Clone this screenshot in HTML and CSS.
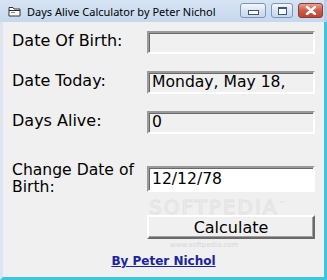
FILE: index.html
```html
<!DOCTYPE html>
<html>
<head>
<title>Days Alive Calculator by Peter Nichol</title>
<meta http-equiv="content-type" content="text/html; charset=utf8">
<link rel="stylesheet" href="styles.css">
</head>
<body>
<div class="window">
    <div class="titlebar">
        <svg class="appicon" width="13" height="12" viewBox="0 0 13 12">
            <path d="M1 2.5h4l1 1.5h6v7H1z" fill="#fff" stroke="#333" stroke-width="1"/>
            <path d="M1 5.5h11" stroke="#333" stroke-width="1"/>
            <path d="M3 7.5h4" stroke="#888" stroke-width="1"/>
        </svg>
        <span class="caption">Days Alive Calculator by Peter Nichol</span>
        <div class="capbtns">
            <div class="capbtn minbtn"><span class="minglyph"></span></div>
            <div class="capbtn maxbtn"><span class="maxglyph"></span></div>
            <div class="capbtn closebtn">
                <svg width="12" height="9" viewBox="0 0 12 9">
                    <path d="M2 1l8 7M10 1l-8 7" stroke="#fff" stroke-width="2.4" stroke-linecap="round"/>
                </svg>
            </div>
        </div>
    </div>

    <div class="client">
        <div class="row row-first">
            <div class="label">Date Of Birth:</div>
            <div class="field"></div>
        </div>
        <div class="row">
            <div class="label">Date Today:</div>
            <div class="field">Monday, May 18,</div>
        </div>
        <div class="row">
            <div class="label">Days Alive:</div>
            <div class="field">0</div>
        </div>
        <div class="row row-change">
            <div class="label label-two">Change Date of<br>Birth:</div>
            <div class="field field-edit">12/12/78</div>
        </div>
        <div class="row row-button">
            <div class="spacer"></div>
            <div class="button">Calculate</div>
        </div>
        <div class="credit"><a href="javascript:void(0)">By Peter Nichol</a></div>

        <div class="watermark">SOFTPEDIA<sup>™</sup></div>
        <div class="watermark-url">www.softpedia.com</div>
    </div>
</div>
</body>
</html>
```

FILE: styles.css
```css
body {
    margin: 0;
    width: 327px;
    height: 280px;
    overflow: hidden;
    background: #000;
}
.window {
    display: flex;
    flex-direction: column;
    height: 280px;
    background: #cbdcef;
}
.titlebar {
    height: 22px;
    display: flex;
    align-items: center;
    padding-left: 8px;
    background: linear-gradient(#d6e4f4, #c5d8ee);
    border-right: 3px solid #b9cde6;
}
.appicon {
    margin-right: 6px;
}
.caption {
    font-family: "Noto Sans", sans-serif;
    font-size: 11px;
    color: #000;
    flex: 1;
}
.capbtns {
    display: flex;
    gap: 5px;
    margin-right: 1px;
    margin-top: -1px;
}
.capbtn {
    height: 13px;
    border: 1px solid #7f95b8;
    border-radius: 3px;
    display: flex;
    align-items: center;
    justify-content: center;
    background: linear-gradient(#f3f7fc, #d9e4f2 50%, #c8d7ea);
}
.minbtn {
    width: 24px;
}
.maxbtn {
    width: 20px;
}
.closebtn {
    width: 23px;
    border-color: #8a3a34;
    background: linear-gradient(#e8a293, #cf5a47 50%, #c0432f);
}
.minglyph {
    width: 9px;
    height: 3px;
    border: 1px solid #41577a;
    background: #fff;
    margin-top: 3px;
}
.maxglyph {
    width: 7px;
    height: 5px;
    border: 1px solid #41577a;
    border-top-width: 2px;
    background: #fff;
}
.client {
    position: relative;
    flex: 1;
    background: #f0f0f0;
    border-left: 3px solid #dce6f2;
    border-right: 3px solid #3cc6e2;
    border-bottom: 3px solid #3cc6e2;
    padding: 9px 0 0 9px;
    font-family: "DejaVu Sans", sans-serif;
    font-size: 16px;
    color: #000;
}
.row {
    display: grid;
    grid-template-columns: 135px 168px;
    align-items: start;
    margin-top: 17px;
}
.row-first {
    margin-top: 0;
}
.row-change {
    margin-top: 32px;
}
.row-button {
    margin-top: 23px;
}
.label {
    line-height: 18px;
    padding-top: 1px;
}
.label-two {
    font-size: 15.6px;
    line-height: 17px;
    margin-top: -5px;
    margin-bottom: -10px;
}
.field {
    height: 19px;
    line-height: 19px;
    padding-left: 3px;
    font-size: 15.6px;
    border-top: 2px solid #9a9a9a;
    border-left: 2px solid #9a9a9a;
    border-bottom: 2px solid #fff;
    border-right: 2px solid #fff;
    box-shadow: inset 1px 1px 0 #6a6a6a;
    background: #f0f0f0;
    white-space: nowrap;
    overflow: hidden;
}
.field-edit {
    height: 22px;
    line-height: 22px;
    background: #fff;
}
.button {
    height: 20px;
    line-height: 21px;
    text-align: center;
    border-top: 2px solid #fff;
    border-left: 2px solid #fff;
    border-bottom: 2px solid #6a6a6a;
    border-right: 2px solid #6a6a6a;
    box-shadow: inset -1px -1px 0 #a0a0a0;
    background: #f0f0f0;
}
.credit {
    text-align: center;
    margin-top: 15px;
    margin-left: -9px;
    font-size: 12px;
    font-weight: bold;
}
.credit a {
    color: #1c239e;
}
.watermark {
    position: absolute;
    left: 146px;
    top: 172px;
    font-family: "DejaVu Sans", sans-serif;
    font-size: 20px;
    line-height: 20px;
    letter-spacing: 2px;
    color: transparent;
    -webkit-text-stroke: 1px #e2e2e2;
    pointer-events: none;
}
.watermark sup {
    font-size: 7px;
    -webkit-text-stroke: 0;
    color: #dedede;
}
.watermark-url {
    position: absolute;
    left: 167px;
    top: 219px;
    font-size: 7px;
    line-height: 8px;
    color: #d6d6d6;
    pointer-events: none;
}
```
